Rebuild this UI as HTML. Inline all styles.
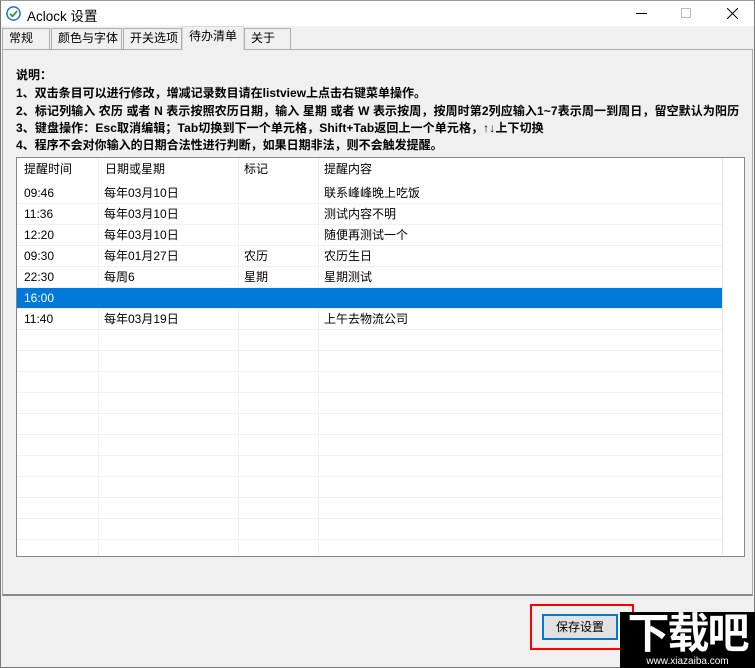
<!DOCTYPE html>
<html><head><meta charset="utf-8"><style>
*{margin:0;padding:0;box-sizing:border-box}
body{width:755px;height:668px;background:#f0f0f0;position:relative;overflow:hidden;font-family:"Liberation Sans","Microsoft YaHei","Noto Sans CJK SC",sans-serif;font-size:12px;color:#000}
.abs{position:absolute}
#win{left:0;top:0;width:755px;height:668px;border:1px solid #7a7a7a;border-top:1px solid #9a9a9a}
#title{left:1px;top:1px;width:753px;height:25px;background:#fff}
.tab{position:absolute;top:28px;height:21px;background:#f0f0f0;border:1px solid #adadad;border-bottom:none;font-size:12px;line-height:19px;padding-left:6px}
#panel{left:2px;top:49px;width:751px;height:547px;border:1px solid #adadad;border-bottom:2px solid #8a8a8a}
.txt{left:16px;font-weight:bold;font-size:12px;white-space:nowrap}
#list{left:16px;top:157px;width:729px;height:400px;border:1px solid #828790;background:#fff;overflow:hidden}
.cell{position:absolute;font-size:12px;line-height:21px;white-space:nowrap}
</style></head><body>
<div id="win" class="abs"></div>
<div id="title" class="abs">
<svg class="abs" style="left:5px;top:5px" width="15" height="15" viewBox="0 0 16 16"><circle cx="8" cy="8" r="7" fill="#fff" stroke="#1e6fd0" stroke-width="1.6"/><path d="M4.3 8.3l2.5 2.6 5-5.4" fill="none" stroke="#2ca02c" stroke-width="2"/></svg>
<div class="abs" style="left:26px;top:4px;font-size:13.5px">Aclock 设置</div>
<div class="abs" style="left:635px;top:12px;width:11px;height:1px;background:#000"></div>
<div class="abs" style="left:680px;top:7px;width:10px;height:10px;border:1px solid #bbb"></div>
<svg class="abs" style="left:726px;top:7px" width="11" height="11"><path d="M0 0L11 11M11 0L0 11" stroke="#000" stroke-width="1"/></svg>
</div>
<div id="panel" class="abs"></div>
<div class="tab" style="left:2px;width:48px">常规</div>
<div class="tab" style="left:51px;width:71px">颜色与字体</div>
<div class="tab" style="left:123px;width:59px">开关选项</div>
<div class="tab" style="left:182px;top:26px;height:24px;width:62px;background:#f0f0f0;border-color:#d9d9d9;z-index:2">待办清单</div>
<div class="tab" style="left:244px;width:47px">关于</div>
<div class="abs txt" style="top:66px">说明：</div>
<div class="abs txt" style="top:84px">1、双击条目可以进行修改，增减记录数目请在listview上点击右键菜单操作。</div>
<div class="abs txt" style="top:102px;letter-spacing:0.1px">2、标记列输入 农历 或者 N 表示按照农历日期，输入 星期 或者 W 表示按周，按周时第2列应输入1~7表示周一到周日，留空默认为阳历</div>
<div class="abs txt" style="top:119px;letter-spacing:0.1px">3、键盘操作：Esc取消编辑；Tab切换到下一个单元格，Shift+Tab返回上一个单元格，↑↓上下切换</div>
<div class="abs txt" style="top:136px">4、程序不会对你输入的日期合法性进行判断，如果日期非法，则不会触发提醒。</div>
<div id="list" class="abs">
<div class="abs" style="left:0;top:25px;width:705px;height:380px;background:repeating-linear-gradient(#fff 0 20px,#f0f0f0 20px 21px)"></div>
<div class="abs" style="left:81px;top:0;width:1px;height:400px;background:#f0f0f0"></div>
<div class="abs" style="left:221px;top:0;width:1px;height:400px;background:#f0f0f0"></div>
<div class="abs" style="left:301px;top:0;width:1px;height:400px;background:#f0f0f0"></div>
<div class="abs" style="left:705px;top:0;width:1px;height:400px;background:#e5e5e5"></div>
<div class="abs" style="left:0;top:130px;width:705px;height:20px;background:#0078d7"></div>
<div class="cell" style="left:7px;top:1px">提醒时间</div><div class="cell" style="left:88px;top:1px">日期或星期</div><div class="cell" style="left:227px;top:1px">标记</div><div class="cell" style="left:307px;top:1px">提醒内容</div>
<div class="cell" style="left:7px;top:25px">09:46</div><div class="cell" style="left:87px;top:25px">每年03月10日</div><div class="cell" style="left:307px;top:25px">联系峰峰晚上吃饭</div>
<div class="cell" style="left:7px;top:46px">11:36</div><div class="cell" style="left:87px;top:46px">每年03月10日</div><div class="cell" style="left:307px;top:46px">测试内容不明</div>
<div class="cell" style="left:7px;top:67px">12:20</div><div class="cell" style="left:87px;top:67px">每年03月10日</div><div class="cell" style="left:307px;top:67px">随便再测试一个</div>
<div class="cell" style="left:7px;top:88px">09:30</div><div class="cell" style="left:87px;top:88px">每年01月27日</div><div class="cell" style="left:227px;top:88px">农历</div><div class="cell" style="left:307px;top:88px">农历生日</div>
<div class="cell" style="left:7px;top:109px">22:30</div><div class="cell" style="left:87px;top:109px">每周6</div><div class="cell" style="left:227px;top:109px">星期</div><div class="cell" style="left:307px;top:109px">星期测试</div>
<div class="cell" style="left:7px;top:130px;color:#fff;line-height:20px">16:00</div>
<div class="cell" style="left:7px;top:151px">11:40</div><div class="cell" style="left:87px;top:151px">每年03月19日</div><div class="cell" style="left:307px;top:151px">上午去物流公司</div>
</div>
<div class="abs" style="left:530px;top:604px;width:104px;height:46px;border:2px solid #f00"></div>
<div class="abs" style="left:542px;top:614px;width:76px;height:26px;border:2px solid #0078d7;background:#e1e1e1;text-align:center;line-height:22px;font-size:12px">保存设置</div>
<div class="abs" style="left:620px;top:612px;width:135px;height:56px;background:#000;color:#fff;text-align:center">
<div style="font-size:42px;font-weight:bold;line-height:44px;letter-spacing:-2px">下载吧</div>
<div style="font-size:10px;line-height:11px">www.xiazaiba.com</div></div>
</body></html>
